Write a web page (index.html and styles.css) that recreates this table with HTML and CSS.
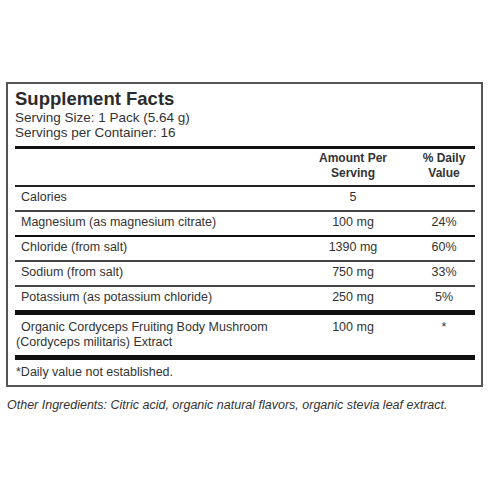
FILE: index.html
```html
<!DOCTYPE html>
<html lang="en">
<head>
    <meta charset="UTF-8">
    <meta name="viewport" content="width=device-width, initial-scale=1.0">
    <title>Supplement Facts</title>
    <link rel="stylesheet" href="styles.css">
</head>
<body>
    <div class="facts">
        <h1 class="title">Supplement Facts</h1>
        <p class="serving">Serving Size: 1 Pack (5.64 g)</p>
        <p class="serving">Servings per Container: 16</p>

        <div class="row head thick-top">
            <span class="name"></span>
            <span class="amount">Amount Per<br>Serving</span>
            <span class="dv">% Daily<br>Value</span>
        </div>

        <div class="row line-mid">
            <span class="name">Calories</span>
            <span class="amount">5</span>
            <span class="dv"></span>
        </div>
        <div class="row line-thick">
            <span class="name">Magnesium (as magnesium citrate)</span>
            <span class="amount">100 mg</span>
            <span class="dv">24%</span>
        </div>
        <div class="row line-mid">
            <span class="name">Chloride (from salt)</span>
            <span class="amount">1390 mg</span>
            <span class="dv">60%</span>
        </div>
        <div class="row line-mid">
            <span class="name">Sodium (from salt)</span>
            <span class="amount">750 mg</span>
            <span class="dv">33%</span>
        </div>
        <div class="row">
            <span class="name">Potassium (as potassium chloride)</span>
            <span class="amount">250 mg</span>
            <span class="dv">5%</span>
        </div>
        <div class="row tall line-bold">
            <span class="name wrap">Organic Cordyceps Fruiting Body Mushroom (Cordyceps militaris) Extract</span>
            <span class="amount">100 mg</span>
            <span class="dv">*</span>
        </div>

        <p class="note line-bold">*Daily value not established.</p>
    </div>

    <p class="other">Other Ingredients: Citric acid, organic natural flavors, organic stevia leaf extract.</p>
</body>
</html>
```

FILE: styles.css
```css
body {
    margin: 0;
    padding: 82px 10px 0 6px;
    font-family: "Liberation Sans", Arial, sans-serif;
    color: #333;
    background: #fff;
}
.facts {
    border: 2px solid #555;
    padding: 3px 6px 0 7px;
}
.title {
    margin: 0;
    font-size: 18.5px;
    line-height: 23px;
    font-weight: bold;
    color: #2b2b2b;
}
.serving {
    margin: 0;
    font-size: 13.5px;
    line-height: 15px;
}
.serving + .serving {
    margin-bottom: 6px;
}
.row {
    display: grid;
    grid-template-columns: 1fr 120px 62px;
    align-items: start;
    font-size: 12.5px;
    line-height: 15px;
    padding: 3px 0 5px;
}
.row .name {
    padding-left: 6px;
}
.row .amount,
.row .dv {
    text-align: center;
}
.head {
    font-weight: bold;
    font-size: 12px;
    padding: 2px 0 4px;
}
.thick-top {
    border-top: 3px solid #111;
    border-bottom: 2px solid #222;
}
.line-mid {
    border-bottom: 2px solid #444;
}
.line-thick {
    border-bottom: 2px solid #111;
}
.line-bold {
    border-top: 5px solid #111;
}
.tall {
    padding: 5px 0 5px;
}
.name.wrap {
    padding-left: 1px;
    text-indent: 5px;
}
.note {
    margin: 0;
    font-size: 12.5px;
    line-height: 15px;
    padding: 5px 0 5px 1px;
}
.other {
    margin: 11px 0 0 1px;
    font-size: 12.5px;
    font-style: italic;
}
```
